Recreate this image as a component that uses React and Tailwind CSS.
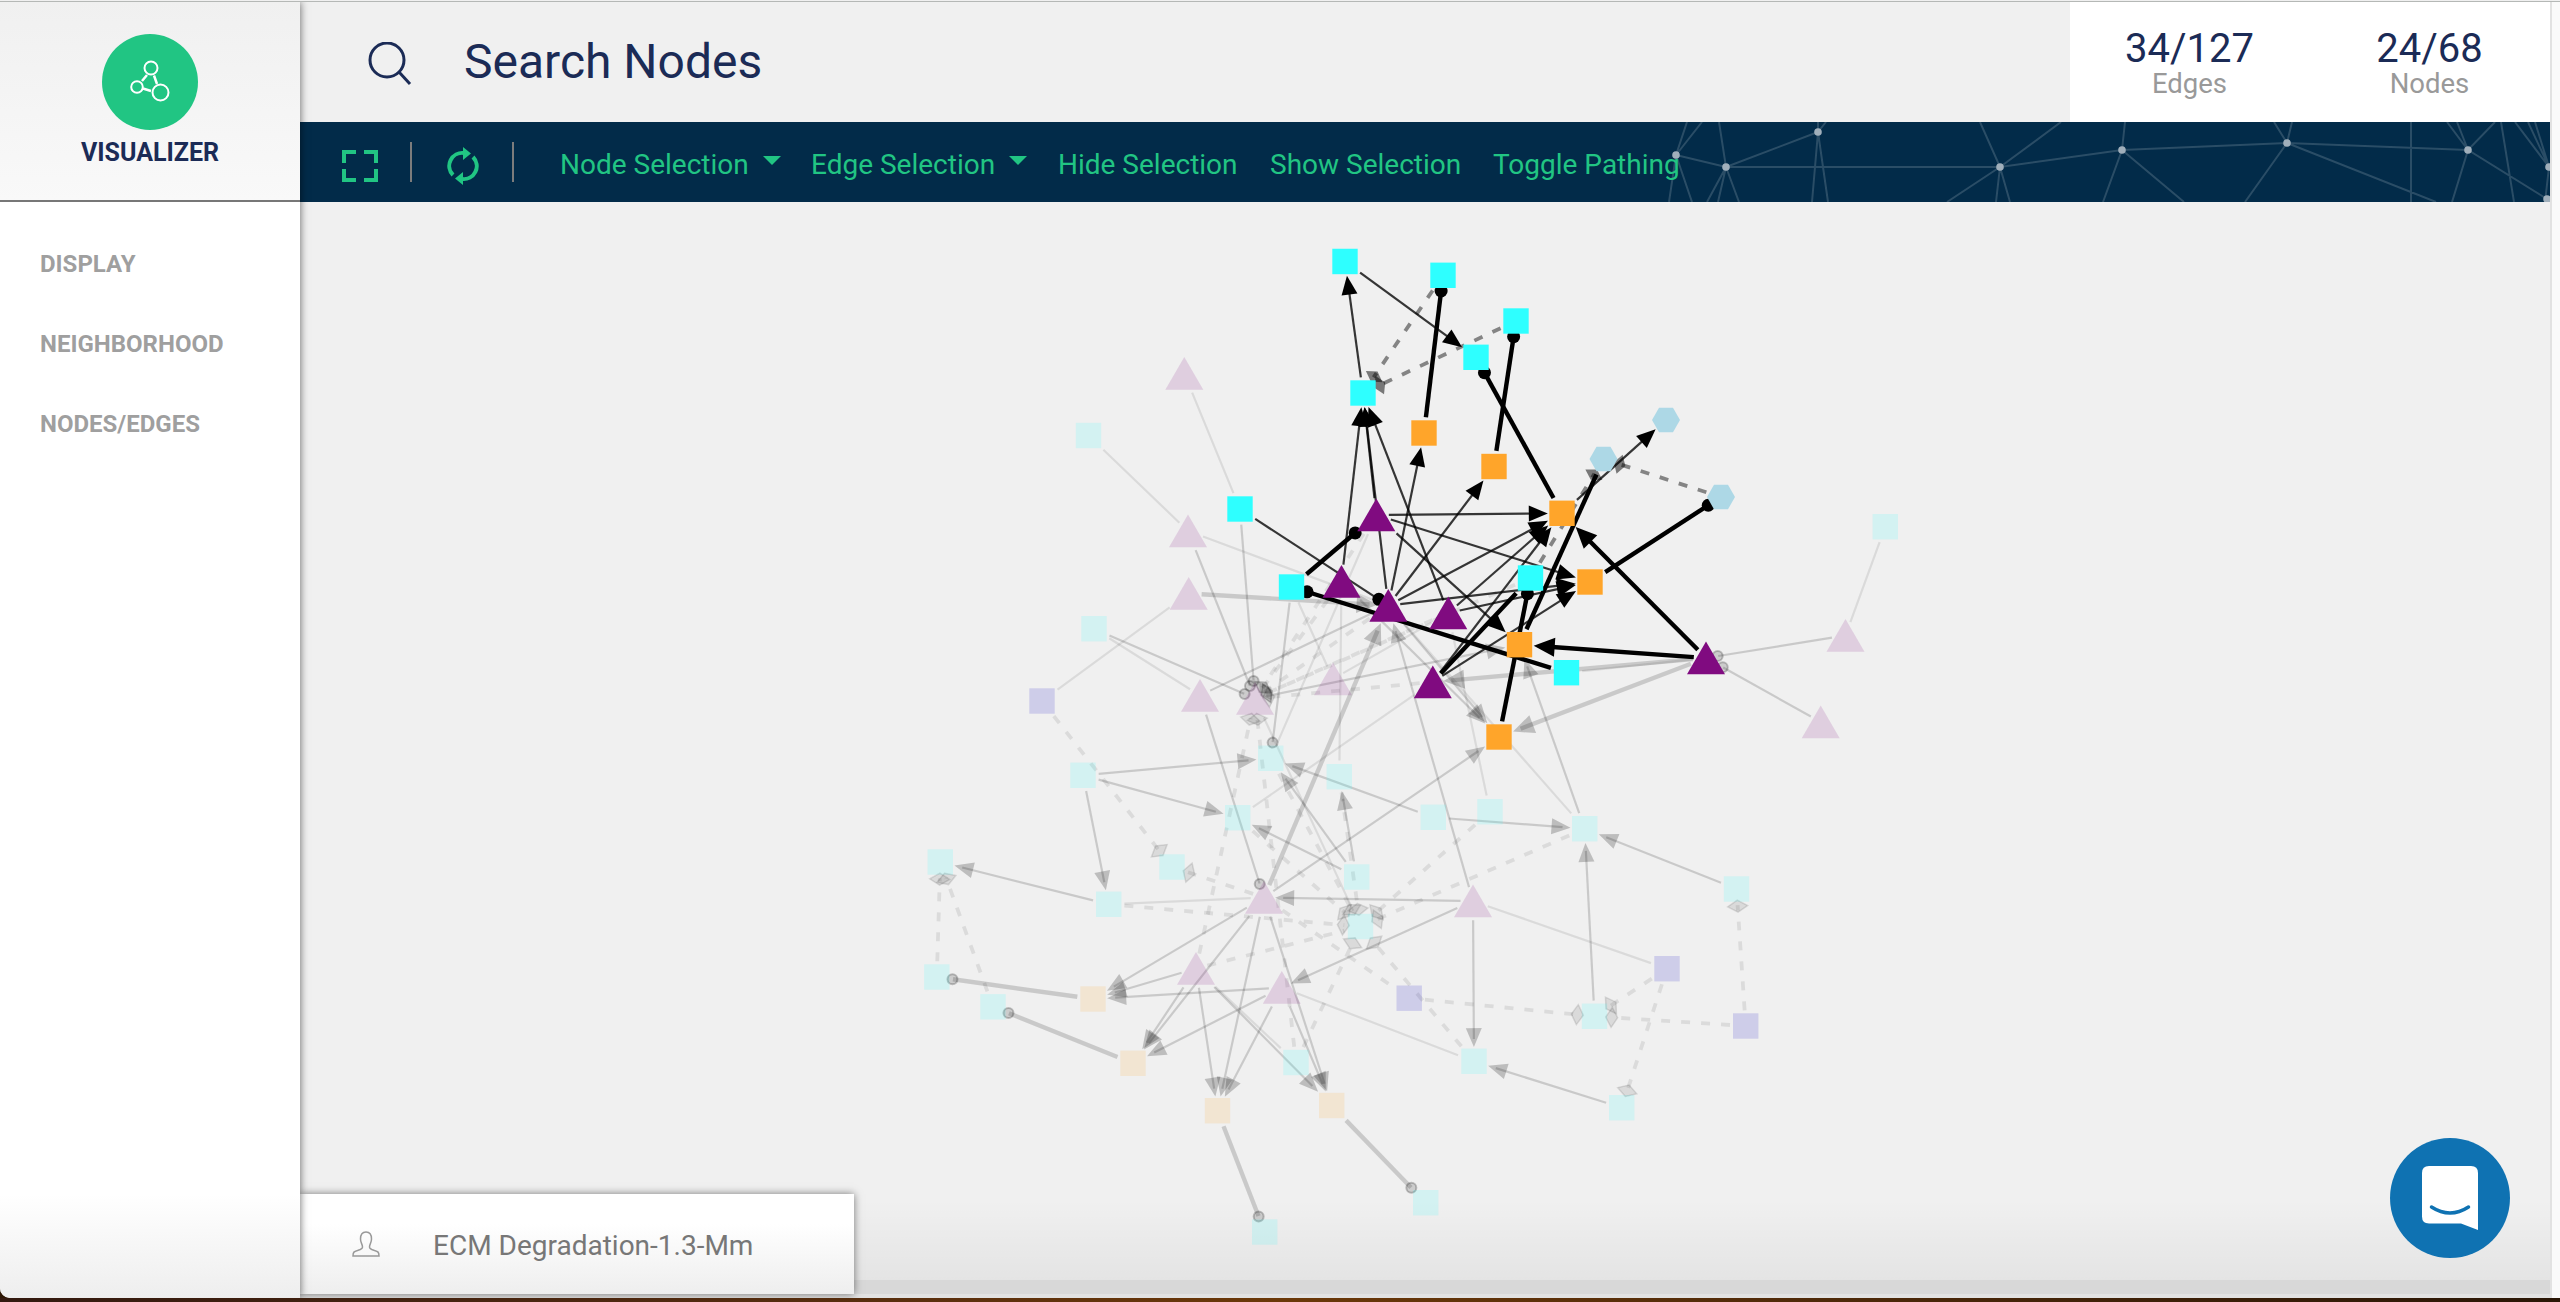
import React from "react";

const COLORS = {
  cyan: "#2effff",
  orange: "#ffa52a",
  purple: "#800b80",
  blue: "#0d08c4",
  sky: "#add8e6",
};

// id: [kind, color, x, y, faded]
const NODES = {
  A: ["sq", "cyan", 1345, 261.5], B: ["sq", "cyan", 1443, 275.3], C: ["sq", "cyan", 1516, 321],
  D: ["sq", "cyan", 1476, 357.3], E: ["sq", "cyan", 1363, 393], F: ["sq", "orange", 1424, 433],
  G: ["sq", "orange", 1494, 466.5], H: ["hex", "sky", 1666, 420], I: ["hex", "sky", 1603.5, 459],
  J: ["hex", "sky", 1721, 497], K: ["sq", "cyan", 1240, 509], L: ["sq", "cyan", 1291.5, 587],
  M: ["tri", "purple", 1376.3, 515], N: ["tri", "purple", 1341.5, 581.5], O: ["tri", "purple", 1388.3, 605.5],
  P: ["tri", "purple", 1448.3, 613], Q: ["tri", "purple", 1432.8, 682], R: ["tri", "purple", 1706, 658],
  S: ["sq", "orange", 1562, 513.3], T: ["sq", "orange", 1590, 582], U: ["sq", "orange", 1519.5, 644.7],
  V: ["sq", "orange", 1499, 737], W: ["sq", "cyan", 1530.5, 578], X: ["sq", "cyan", 1566.5, 672.7],
  a: ["tri", "purple", 1184.3, 373.5, 1], b: ["sq", "cyan", 1088.5, 435.5, 1], c: ["tri", "purple", 1188, 531, 1],
  d: ["tri", "purple", 1188.7, 593.5, 1], e: ["sq", "cyan", 1094, 628.7, 1], f: ["sq", "blue", 1042, 701, 1],
  g: ["tri", "purple", 1200, 695.5, 1], h: ["tri", "purple", 1255, 698.5, 1], i: ["tri", "purple", 1333, 679, 1],
  j: ["sq", "cyan", 1885.3, 526.7, 1], k: ["tri", "purple", 1845.5, 635.5, 1], l: ["tri", "purple", 1820.7, 722, 1],
  m: ["sq", "cyan", 1270.7, 758.3, 1], n: ["sq", "cyan", 1339.3, 776.7, 1], o: ["sq", "cyan", 1083, 775.3, 1],
  p: ["sq", "cyan", 1237.7, 817.7, 1], q: ["sq", "cyan", 940.3, 862, 1], r: ["sq", "cyan", 1172, 867, 1],
  s: ["sq", "cyan", 1108.7, 904.3, 1], t: ["tri", "purple", 1264, 897.5, 1], u: ["sq", "cyan", 1356.7, 877, 1],
  v: ["sq", "cyan", 1360.5, 926.5, 1], w: ["sq", "cyan", 936.8, 977, 1], x: ["sq", "cyan", 993, 1006.8, 1],
  y: ["sq", "orange", 1093, 999, 1], z: ["tri", "purple", 1196, 968.5, 1], A2: ["tri", "purple", 1281.8, 987.5, 1],
  B2: ["sq", "blue", 1409.2, 998.2, 1], C2: ["sq", "orange", 1133, 1063.3, 1], D2: ["sq", "cyan", 1296, 1062.5, 1],
  E2: ["sq", "orange", 1217.5, 1110.7, 1], F2: ["sq", "orange", 1331.7, 1105.5, 1], G2: ["sq", "cyan", 1425.7, 1202.7, 1],
  H2: ["sq", "cyan", 1264.7, 1232, 1], I2: ["sq", "cyan", 1433.3, 817.3, 1], J2: ["sq", "cyan", 1490, 811.7, 1],
  K2: ["sq", "cyan", 1584.7, 828.7, 1], L2: ["tri", "purple", 1473, 901, 1], M2: ["sq", "cyan", 1736.5, 889, 1],
  N2: ["sq", "blue", 1667, 968.7, 1], O2: ["sq", "cyan", 1594.5, 1016.3, 1], P2: ["sq", "blue", 1745.7, 1026, 1],
  Q2: ["sq", "cyan", 1474, 1061.3, 1], R2: ["sq", "cyan", 1621.7, 1107.7, 1],
};

// Edge styles: arrow / thick end in a triangle, circle / bold in a dot,
// dash in a diamond; plain, plain2, line and dashx have no end marker.
const FADED_EDGES = `a-K plain|b-c plain|c-O plain|d-f plain|e-g plain|L-i plain|N-n plain|M-m plain|P-J2 plain|O-K2 plain|
p-Q plain|P-i plain|s-t plain|h-v plain|z-D2 plain|A2-Q2 plain|L2-N2 plain|j-k plain|X-R plain|g-O plain2|h-U arrow|c-h circle|K-h circle|e-h circle|
L-m circle|g-t circle|k-R circle|l-R circle|d-O thick|t-O thick|R-Q thick|R-V thick|L2-O arrow|O-V arrow|N-V arrow|K2-U arrow|t-V arrow|
I2-m arrow|I2-K2 arrow|M2-K2 arrow|O2-K2 arrow|o-m arrow|o-p arrow|o-s arrow|s-q arrow|u-m arrow|u-n arrow|u-p arrow|
L2-t arrow|L2-A2 arrow|L2-Q2 arrow|R2-Q2 arrow|t-y arrow|t-C2 arrow|t-E2 arrow|t-F2 arrow|z-y arrow|z-C2 arrow|z-E2 arrow|z-F2 arrow|
A2-y arrow|A2-C2 arrow|A2-E2 arrow|A2-F2 arrow|y-w bold|C2-x bold|E2-H2 bold|F2-G2 bold|
M-h dash|N-h dash|O-h dash|P-h dash|Q-h dash|W-h dash|z-h dash|D2-h dash|f-r dash|t-r dash|w-q dash|x-q dash|s-v dash|m-v dash|p-v dash|
J2-v dash|K2-v dash|n-v dash|z-v dashx|D2-v dash|Q2-v dash|t-B2 dashx|B2-O2 dash|P2-O2 dash|N2-O2 dash|N2-R2 dash|P2-M2 dash`;

const ACTIVE_EDGES = `B-E dash|C-E dash|W-I dash|J-I dash|E-A arrow|A-D arrow|N-E arrow|M-E arrow|O-E arrow|P-E arrow|O-F arrow|O-G arrow|
M-S arrow|O-S arrow|P-S arrow|Q-S arrow|M-T arrow|O-T arrow|P-T arrow|Q-T arrow|M-U arrow|S-H arrow|K-O circle|
F-B bold|G-C bold|S-D bold|L-M bold|X-L bold|V-W bold|T-J bold|Q-W line|U-I line|R-S thick|R-U thick`;

const parse = (s) =>
  s.split("|").map((row) => {
    const [pair, style] = row.trim().split(" ");
    const [from, to] = pair.split("-");
    return { from, to, style };
  });

const SHAPES = {
  sq: [[-12.7, -12.7], [12.7, -12.7], [12.7, 12.7], [-12.7, 12.7]],
  tri: [[0, -16.5], [19, 16.3], [-19, 16.3]],
  hex: [[-7, -12.3], [7, -12.3], [14, 0], [7, 12.3], [-7, 12.3], [-14, 0]],
};

// Distance from a shape's centre to its outline along a unit direction.
function reach(kind, dx, dy) {
  const pts = SHAPES[kind];
  let best = 12;
  for (let n = 0; n < pts.length; n++) {
    const [x1, y1] = pts[n];
    const [x2, y2] = pts[(n + 1) % pts.length];
    const ex = x2 - x1;
    const ey = y2 - y1;
    const det = dx * ey - dy * ex;
    if (Math.abs(det) < 1e-6) continue;
    const dist = (x1 * ey - y1 * ex) / det;
    const k = (x1 * dy - y1 * dx) / det;
    if (dist > 0 && k >= -0.001 && k <= 1.001) best = dist;
  }
  return best;
}

function Edge({ from, to, style, faded }) {
  const [k1, , x1, y1] = NODES[from];
  const [k2, , x2, y2] = NODES[to];
  const len = Math.hypot(x2 - x1, y2 - y1);
  const ux = (x2 - x1) / len;
  const uy = (y2 - y1) / len;
  const s = reach(k1, ux, uy) + 3;
  const e = reach(k2, -ux, -uy) + 1.5;
  const at = (d, side = 0) => [x2 - ux * d - uy * side, y2 - uy * d + ux * side];
  const [sx, sy] = [x1 + ux * s, y1 + uy * s];
  const dashed = style.startsWith("dash");
  const wide = style === "bold" || style === "thick" || style === "line";
  const width = wide ? 4.4 : dashed ? 3.8 : 2.2;
  let end = e + 2;
  if (style === "arrow" || style === "thick") end = e + 8;
  if (style === "circle" || style === "bold") end = e + 2;
  const [ex, ey] = at(end);
  const lineOpacity = faded
    ? style === "plain" ? 0.09 : dashed ? 0.085 : 0.16
    : dashed ? 0.45 : wide ? 1 : 0.78;
  const arrowLen = style === "thick" ? 21 : 19;
  const arrowHalf = style === "thick" ? 9.5 : 8;
  const poly = (list) => list.map((p) => p.join(",")).join(" ");
  return (
    <g>
      <line x1={sx} y1={sy} x2={ex} y2={ey} stroke="#000" strokeWidth={width} strokeOpacity={lineOpacity} strokeDasharray={dashed ? "9 11" : undefined} />
      {(style === "arrow" || style === "thick") && (
        <polygon points={poly([at(e), at(e + arrowLen, arrowHalf), at(e + arrowLen, -arrowHalf)])} fillOpacity={faded ? 0.21 : 1} />
      )}
      {(style === "circle" || style === "bold") && (
        <circle cx={at(e + 1.5)[0]} cy={at(e + 1.5)[1]} r={faded ? 5 : 6.5} fillOpacity={faded ? 0.15 : 1} stroke="#000" strokeOpacity={faded ? 0.22 : 1} strokeWidth={faded ? 2 : 0} />
      )}
      {style === "dash" && (
        <polygon points={poly([at(e - 3), at(e + 3, 10), at(e + 9), at(e + 3, -10)])} fillOpacity={faded ? 0.09 : 0.5} stroke="#000" strokeOpacity={faded ? 0.11 : 0} strokeWidth="1.5" />
      )}
    </g>
  );
}

function Node({ node }) {
  const [kind, color, x, y, faded] = node;
  return (
    <polygon
      points={SHAPES[kind].map(([dx, dy]) => `${x + dx},${y + dy}`).join(" ")}
      fill={COLORS[color]}
      fillOpacity={faded ? 0.15 : 1}
    />
  );
}

function Graph() {
  const list = Object.entries(NODES);
  return (
    <svg className="block h-full w-full" viewBox="300 202 2250 1078">
      {parse(FADED_EDGES).map((edge) => <Edge key={edge.from + edge.to} {...edge} faded />)}
      {list.filter(([, n]) => n[4]).map(([id, n]) => <Node key={id} node={n} />)}
      {parse(ACTIVE_EDGES).map((edge) => <Edge key={edge.from + edge.to} {...edge} />)}
      {list.filter(([, n]) => !n[4]).map(([id, n]) => <Node key={id} node={n} />)}
    </svg>
  );
}

function ToolbarMesh() {
  const dots = [[1676, 155], [1726, 167], [1818, 132], [2000, 167], [2122, 150], [2287, 143], [2468, 150], [2549, 167], [2547, 199]];
  return (
    <svg className="absolute right-0 top-0 h-20 w-[900px]" viewBox="1650 122 900 80" fill="none">
      <path
        stroke="#fff"
        strokeOpacity=".16"
        strokeWidth="2"
        d="M1687 122 1676 155 1702 122M1676 155 1726 167H2000L2122 150 2287 143 2468 150 2547 199M1676 155 1669 202M1676 155 1692 202M1726 167 1818 132M1719 122 1726 167 1707 202M1726 167 1718 202M1726 167 1739 202M1818 122V132L1812 202M1818 132 1828 202M1818 132 1826 122M1980 122 2000 167 2061 122M2000 167 1947 202M2000 167 1996 202M2000 167 2010 202M2125 122 2122 150 2103 202M2122 150 2184 202M2274 122 2287 143 2292 122M2287 143 2245 202M2287 143 2436 202M2411 122V202M2447 122 2468 150 2495 122M2457 122 2468 150 2452 202M2501 122 2514 202M2515 122 2549 167M2528 122 2549 167M2535 122 2549 167 2545 202"
      />
      {dots.map(([x, y]) => <circle key={x} cx={x} cy={y} r="3.8" fill="#a0afbb" />)}
    </svg>
  );
}

function MenuItem({ children, caret, className = "" }) {
  return (
    <span className={`flex shrink-0 items-center whitespace-nowrap ${className}`}>
      {children}
      {caret && <span className="-mt-2.5 ml-[14px] border-x-[9px] border-t-[9px] border-x-transparent border-t-[#21c583]" />}
    </span>
  );
}

function Stat({ value, label, className }) {
  return (
    <div className={`text-center ${className}`}>
      <div className="text-[40px] leading-[46px] text-[#1b2b56]">{value}</div>
      <div className="text-[27.5px] leading-6 text-[#999]">{label}</div>
    </div>
  );
}

export default function App() {
  return (
    <div className="flex h-[1302px] w-[2560px] flex-col overflow-hidden bg-[#f0f0f0] pt-px font-[Roboto,sans-serif]">
      <div className="h-[1297px] bg-[#2d1704]">
        <div className="flex h-full overflow-hidden rounded-bl-[10px] border-t border-[#b5b8b6] bg-[#f0f0f0]">
          <aside className="relative z-10 flex w-[300px] shrink-0 flex-col bg-gradient-to-b from-white from-92% to-[#eee] shadow-[0_0_8px_rgba(0,0,0,0.6)]">
            <div className="flex h-[200px] flex-col items-center border-b-2 border-[#777] bg-gradient-to-b from-[#f0f0f0] to-[#f9f9f9] pt-8">
              <div className="flex size-24 items-center justify-center rounded-full bg-[#21c583]">
                <svg className="size-11" viewBox="0 0 44 44" fill="none" stroke="#fff" strokeWidth="2">
                  <circle cx="23" cy="8" r="6.5" />
                  <circle cx="9" cy="27" r="5.800" />
                  <circle cx="32.500" cy="32.500" r="8" />
                  <path strokeWidth="2.500" d="M19 15 14 21M26 15.500 29 24M15 28.500 23 31" />
                </svg>
              </div>
              <div className="mt-[7px] text-[25px] font-bold leading-8 text-[#1b2b56]">VISUALIZER</div>
            </div>
            <nav className="flex flex-col gap-12 pl-10 pt-[46px] text-[24px] font-bold leading-8 text-[#9f9f9f]">
              <span>DISPLAY</span>
              <span>NEIGHBORHOOD</span>
              <span>NODES/EDGES</span>
            </nav>
          </aside>

          <main className="flex w-[2250px] shrink-0 flex-col">
            <header className="flex h-[120px] justify-between">
              <div className="flex items-center pl-[68px]">
                <svg className="mt-1 size-11" viewBox="0 0 44 44" fill="none" stroke="#1b2b56" strokeWidth="3">
                  <circle cx="19" cy="18" r="17" />
                  <path d="M31 30 42 42" />
                </svg>
                <span className="ml-[52px] text-[48px] leading-[56px] text-[#1b2b56]">Search Nodes</span>
              </div>
              <div className="flex w-[480px] bg-white pt-6">
                <Stat value="34/127" label="Edges" className="w-[239px]" />
                <Stat value="24/68" label="Nodes" className="w-[241px]" />
              </div>
            </header>

            <div className="relative flex h-20 shrink-0 items-center bg-[#022b49] pl-[42px] text-[28px] text-[#21c583]">
              <ToolbarMesh />
              <svg className="mt-2 h-8 w-9 shrink-0" viewBox="0 0 36 32" fill="none" stroke="#21c583" strokeWidth="4">
                <path d="M2 13V2H14M22 2H34V13M34 19V30H22M14 30H2V19" />
              </svg>
              <span className="ml-[32px] h-10 w-0.5 bg-[#7c7c7c]" />
              <svg className="ml-[35px] mt-2 h-[38px] w-8 shrink-0" viewBox="0 0 32 38">
                <path fill="none" stroke="#21c583" strokeWidth="4" d="M6 28A13 13 0 0 1 17 6M26 10A13 13 0 0 1 15 32" />
                <path fill="#21c583" d="M16 0 24 6.500 16 13ZM16 25 8 31.500 16 38Z" />
              </svg>
              <span className="ml-[33px] h-10 w-0.5 bg-[#7c7c7c]" />
              <div className="relative ml-[46px] flex items-center pt-1.5">
                <MenuItem caret className="w-[251px]">Node Selection</MenuItem>
                <MenuItem caret className="w-[247px]">Edge Selection</MenuItem>
                <MenuItem className="w-[212px]">Hide Selection</MenuItem>
                <MenuItem className="w-[223px]">Show Selection</MenuItem>
                <MenuItem>Toggle Pathing</MenuItem>
              </div>
            </div>

            <section className="relative h-[1078px] shrink-0">
              <Graph />
              <div className="pointer-events-none absolute inset-x-0 bottom-0 h-20 bg-gradient-to-b from-transparent to-black/5" />
              <div className="absolute -bottom-3.5 left-0 z-[5] flex h-[100px] w-[554px] items-center bg-gradient-to-b from-white from-30% to-[#eee] pl-[52px] shadow-[0_0_8px_rgba(0,0,0,0.5)]">
                <svg className="size-7" viewBox="0 0 28 28" fill="none" stroke="#999" strokeWidth="1.500">
                  <path d="M14 2C10 2 8.500 5 8.500 9c0 4 2 5 2 8 0 2-2 2.500-5 3.500C2 21.500 1 22 1 26h26c0-4-1-4.500-4.500-5.500-3-1-5-1.500-5-3.500 0-3 2-4 2-8 0-4-1.500-7-5.500-7Z" />
                </svg>
                <span className="ml-[53px] mt-1 text-[28px] text-[#777]">ECM Degradation-1.3-Mm</span>
              </div>
              <div className="absolute bottom-[22px] right-10 flex size-[120px] items-center justify-center rounded-full bg-[#0f72b2]">
                <svg className="h-16 w-14" viewBox="0 0 56 64">
                  <path fill="#fff" d="M7 0H49Q56 0 56 7V64L39 57.500H7Q0 57.500 0 50.500V7Q0 0 7 0Z" />
                  <path fill="none" stroke="#0f72b2" strokeWidth="3.500" strokeLinecap="round" d="M9.500 41Q28 53 46.500 41" />
                </svg>
              </div>
            </section>
            <div className="h-3.5 shrink-0 bg-[#d8d8d8]" />
            <div className="flex-1 bg-[#e2e2e2]" />
          </main>
          <div className="flex-1 border-l-2 border-[#e2e2e2] bg-[#fafafa]" />
        </div>
      </div>
      <div className="h-1 shrink-0 bg-gradient-to-r from-[#33190f] via-[#6b3808] to-[#2a1606]" />
    </div>
  );
}
